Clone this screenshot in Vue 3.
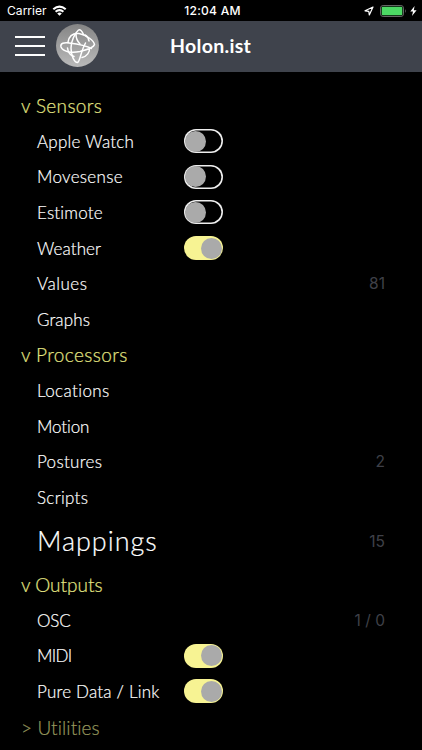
<script setup>
// ls: letter spacing in px
const rows = [
  { label: 'v Sensors', kind: 'head', ls: 0.35 },
  { label: 'Apple Watch', toggle: 'off', ls: 0.25 },
  { label: 'Movesense', toggle: 'off', ls: 0.3 },
  { label: 'Estimote', toggle: 'off', ls: 0.2 },
  { label: 'Weather', toggle: 'on', ls: 0.1 },
  { label: 'Values', count: '81', ls: 0.5 },
  { label: 'Graphs', ls: 0.1 },
  { label: 'v Processors', kind: 'head', ls: 0.4 },
  { label: 'Locations', ls: 0.4 },
  { label: 'Motion', ls: -0.1 },
  { label: 'Postures', count: '2', ls: 0.3 },
  { label: 'Scripts', ls: 0.3 },
  { label: 'Mappings', kind: 'large', count: '15', ls: 0.95 },
  { label: 'v Outputs', kind: 'head', ls: 0 },
  { label: 'OSC', count: '1 / 0', ls: -0.2 },
  { label: 'MIDI', toggle: 'on', ls: -0.7 },
  { label: 'Pure Data / Link', toggle: 'on', ls: 0.2 },
  { label: '> Utilities', kind: 'head closed', ls: 0.1 },
]
</script>

<template>
  <div class="screen">
    <div class="status">
      <div class="carrier">
        <span>Carrier</span>
        <svg class="wifi" viewBox="0 0 15 11">
          <path d="M0.6 3.5Q7.5-2.4 14.4 3.5L13 5Q7.5 .4 2 5ZM2.9 6Q7.5 2.1 12.1 6L10.7 7.4Q7.5 4.9 4.3 7.4ZM5.2 8.4Q7.5 6.6 9.8 8.4L7.5 10.7Z" fill="#fff" />
        </svg>
      </div>
      <div class="time">12:04 AM</div>
      <div class="power">
        <svg class="arrow" viewBox="0 0 10 10"><path d="M9 1 1 4.8 4.8 5.3 5.3 9Z" fill="none" stroke="#fff" stroke-width="1.2" stroke-linejoin="round" /></svg>
        <svg class="battery" viewBox="0 0 27 12">
          <rect x=".5" y=".5" width="23" height="11" rx="2.6" fill="none" stroke="#666" />
          <rect x="1.7" y="1.7" width="20.6" height="8.6" rx="1.3" fill="#4cd964" />
          <path d="M25 4Q26.5 6 25 8Z" fill="#777" />
        </svg>
        <svg class="bolt" viewBox="0 0 7 10"><path d="M4.6 0 .3 5.6H3L2 10 6.6 4.2H3.8Z" fill="#fff" /></svg>
      </div>
    </div>
    <header class="bar">
      <div class="menu"><i /><i /><i /></div>
      <svg class="logo" viewBox="0 0 44 44">
        <defs>
          <linearGradient id="disc" x1="0" y1="0" x2="0" y2="1">
            <stop offset="0" stop-color="#858585" /><stop offset="1" stop-color="#bababa" />
          </linearGradient>
        </defs>
        <circle cx="21.5" cy="21.5" r="21.5" fill="url(#disc)" />
        <g fill="none" stroke="#fff" stroke-width="1.5" stroke-linecap="round" stroke-linejoin="round">
          <path d="M33.5 24C34 28 31 32.5 26 33.5M12 18C13 12 17 9 23 9.5C31 11 38 17 38.5 20.5C38 23 30 26 24 27.5C15 29.5 7 27.5 5 23C4 19 8 18.5 13 19C21 20 31 22 35.5 24.5" />
          <path d="M11.5 24C12 28 14.5 31.5 18 32.5" />
          <path d="M27.5 10.5C26 7 24 5 22.5 6C19 9 15 17 15 24C15 31 18 38.5 21.5 38.5C24 38 24.5 28 29.5 19M33 17C32.5 14 31 12 29 11" />
          <path d="M20 10.5C20 15 22 18 24 20" />
        </g>
      </svg>
      <h1 class="title">Holon.ist</h1>
    </header>
    <main class="list">
      <div v-for="r in rows" :key="r.label" class="row" :class="r.kind">
        <span class="label"><span :style="{ letterSpacing: r.ls + 'px' }">{{ r.label }}</span></span>
        <span v-if="r.toggle" class="toggle" :class="r.toggle"><i /></span>
        <span v-if="r.count" class="count">{{ r.count }}</span>
      </div>
    </main>
  </div>
</template>

<style>
body { background: #000; }
</style>
<style scoped>
.screen { height: 750px; overflow: hidden; background: #000; color: #fff; font-family: Lato, sans-serif; font-variant-ligatures: none; }
.status { height: 21px; display: grid; grid-template-columns: 1fr auto 1fr; align-items: center; font: 12.1px/21px Inter, sans-serif; }
.carrier { display: flex; align-items: center; gap: 5px; padding: 0 0 0 7px; }
.wifi { width: 15px; height: 11px; }
.time { padding-left: 3px; font-weight: 500; letter-spacing: .2px; }
.power { display: flex; justify-content: flex-end; align-items: center; padding-right: 5px; }
.arrow { width: 10px; height: 10px; margin-right: 6px; }
.battery { width: 27px; height: 12px; }
.bolt { width: 7px; height: 10px; margin-left: 3px; }
.bar { height: 50.5px; display: grid; grid-template-columns: 30px 44px 1fr; align-items: center; padding: 0 15px; background: #3f434c; column-gap: 11px; }
.menu { display: grid; gap: 7px; }
.menu i { height: 2px; background: #fff; }
.logo { width: 44px; height: 44px; }
.title { margin: 0; padding: 0 0 0 59px; font: 700 19.5px/50px Lato, sans-serif; letter-spacing: .3px; }
.list { padding: 16.2px 37px 0; }
.row { height: 35.65px; display: flex; align-items: center; font-size: 17px; font-weight: 300; -webkit-text-stroke: .2px currentColor; }
.label { width: 147px; white-space: nowrap; }
.head { margin-left: -16px; font-size: 19px; color: #e3e582; }
.closed { color: #96975c; }
.large { height: 51.3px; font-size: 27px; }
.large .label { padding-bottom: 2px; }
.count { margin-left: auto; font: 15.5px Inter, sans-serif; color: #3f4048; -webkit-text-stroke: 0; }
.toggle { box-sizing: border-box; width: 39px; height: 24px; padding: 0 1px; box-shadow: inset 0 0 0 1.6px #eee; border-radius: 12px; display: flex; align-items: center; }
.toggle i { width: 21px; height: 21px; border-radius: 50%; background: #aaa; }
.toggle.on { justify-content: flex-end; box-shadow: none; background: #f7f393; }
</style>
